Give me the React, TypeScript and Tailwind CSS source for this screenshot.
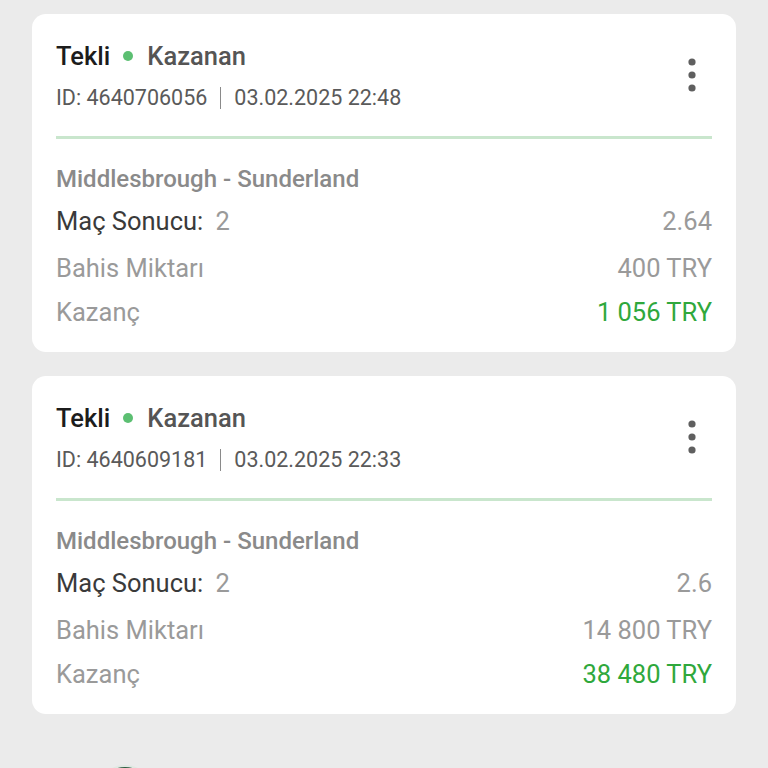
import React from "react";

type Bet = {
  id: string;
  date: string;
  match: string;
  odds: string;
  stake: string;
  win: string;
};

const bets: Bet[] = [
  { id: "4640706056", date: "03.02.2025 22:48", match: "Middlesbrough - Sunderland", odds: "2.64", stake: "400 TRY", win: "1 056 TRY" },
  { id: "4640609181", date: "03.02.2025 22:33", match: "Middlesbrough - Sunderland", odds: "2.6", stake: "14 800 TRY", win: "38 480 TRY" },
];

const Dots = () => (
  <svg width="10" height="36" viewBox="0 0 10 36" className="text-[#5f5f5f]">
    <circle cx="5" cy="5" r="3.6" fill="currentColor" />
    <circle cx="5" cy="18" r="3.6" fill="currentColor" />
    <circle cx="5" cy="31" r="3.6" fill="currentColor" />
  </svg>
);

const BetCard = ({ bet }: { bet: Bet }) => (
  <div className="bg-white rounded-[14px] px-6 pt-[26px] pb-6">
    <div className="flex justify-between">
      <div className="flex flex-col">
        <div className="flex items-center h-8">
          <span className="text-[25.5px] font-medium text-[#1c1c1c]">Tekli</span>
          <span className="w-[10px] h-[10px] rounded-full bg-[#5cbf72] ml-[13px] mr-[14px]" />
          <span className="text-[25.5px] font-medium text-[#555555]">Kazanan</span>
        </div>
        <div className="flex items-center h-7 mt-3 text-[21.5px] text-[#5a5a5a]">
          <span>ID: {bet.id}</span>
          <span className="w-px h-[22px] bg-[#8a8a8a] mx-[13px]" />
          <span>{bet.date}</span>
        </div>
      </div>
      <div className="pt-[17px] pr-[15px]">
        <Dots />
      </div>
    </div>
    <div className="h-[3px] bg-[#c9e6cd] mt-6" />
    <div className="mt-[26px] h-7 flex items-center text-[24px] font-medium text-[#8a8a8a]">{bet.match}</div>
    <div className="mt-3 h-8 flex items-center justify-between text-[25.5px]">
      <span className="text-[#3a3a3a]">
        Maç Sonucu: <span className="text-[#9a9a9a] ml-[6px]">2</span>
      </span>
      <span className="text-[#9a9a9a]">{bet.odds}</span>
    </div>
    <div className="mt-[15px] h-8 flex items-center justify-between text-[25.5px] text-[#9a9a9a]">
      <span>Bahis Miktarı</span>
      <span>{bet.stake}</span>
    </div>
    <div className="mt-3 h-8 flex items-center justify-between text-[25.5px]">
      <span className="text-[#9a9a9a]">Kazanç</span>
      <span className="text-[#2fa83c]">{bet.win}</span>
    </div>
  </div>
);

export default function App() {
  return (
    <div
      className="w-[768px] h-[768px] overflow-hidden bg-[#ebebeb] px-8 pt-[14px]"
      style={{ fontFamily: "Roboto, 'Liberation Sans', sans-serif" }}
    >
      <div className="flex flex-col gap-6">
        {bets.map((b) => (
          <BetCard key={b.id} bet={b} />
        ))}
      </div>
      <div className="mt-[51px] ml-[64px] w-[58px] h-[58px] rounded-full bg-[#2e5a40] border-2 border-[#dfe9e2]" />
    </div>
  );
}
